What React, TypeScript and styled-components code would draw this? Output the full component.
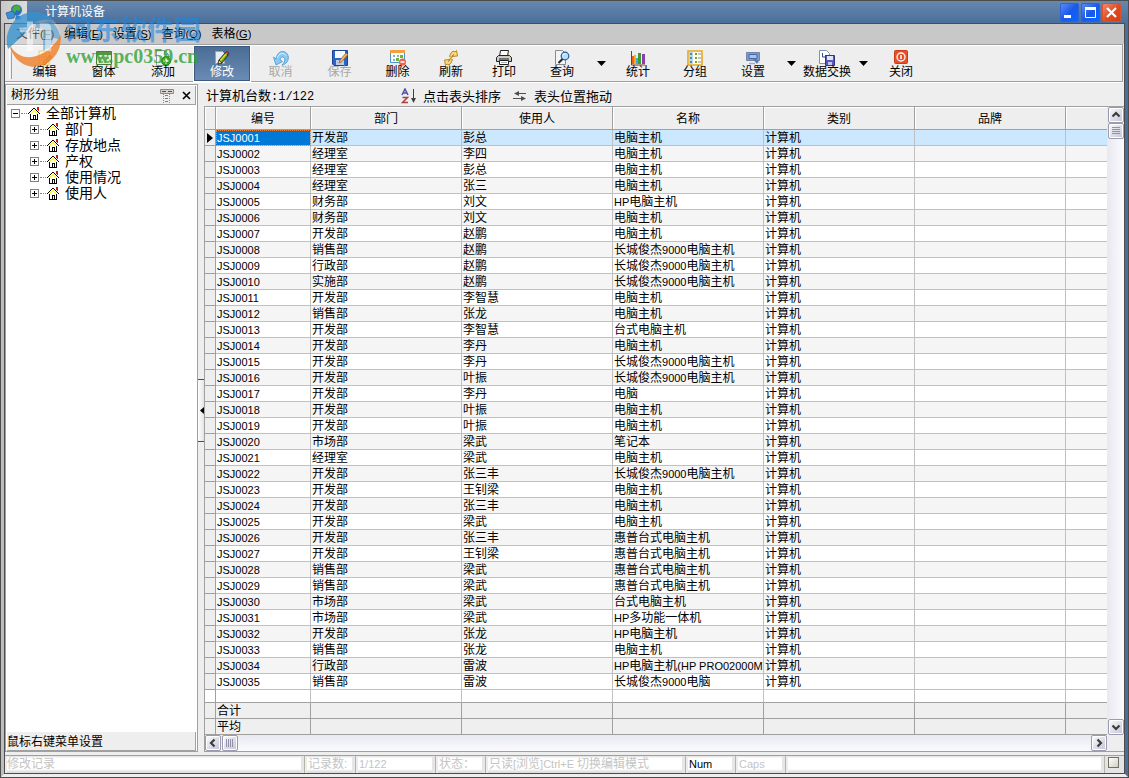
import React from "react";
import styled, { createGlobalStyle, css } from "styled-components";

const DARK = "#4d4d4d";
const FACE = "#eeeeee";
const LINE = "#a0a0a0";
const CJK = '"Liberation Sans", "Noto Sans CJK SC", sans-serif';

const GlobalStyle = createGlobalStyle`
  * { box-sizing: border-box; }
  body { margin: 0; font: 12px/15px ${CJK}; color: #000; background: #4a6f9b; }
  button { font: inherit; color: inherit; padding: 0; margin: 0; border: 0; background: none; }
  svg { display: block; flex: none; }
`;

/* ---------- window frame ---------- */
const Frame = styled.div`
  position: relative;
  min-height: 100vh;
  display: flex;
  flex-direction: column;
  border: 1px solid ${DARK};
  background: #4a6f9b;
`;
const TitleBar = styled.header`
  height: 22px;
  display: flex;
  align-items: center;
  padding-right: 7px;
  background: linear-gradient(#6688ae, #4a6f9b);
`;
const AppBadge = styled.div`
  width: 26px;
  height: 22px;
  display: flex;
  justify-content: center;
  align-items: center;
  margin-right: 18px;
  background: linear-gradient(90deg, #c8c8c8, #dcdcdc);
`;
const Title = styled.h1`
  flex: 1;
  margin: 0;
  font-size: 12px;
  font-weight: 400;
  color: #fff;
`;
const Controls = styled.div`
  display: flex;
  gap: 2px;
`;
const ControlButton = styled.button<{ $close?: boolean }>`
  width: 19px;
  height: 19px;
  border-radius: 2px;
  border: 1px solid ${p => (p.$close ? "#d8502c" : "#2a62d8")};
  background: ${p =>
    p.$close
      ? "linear-gradient(135deg, #f08a6c, #e04a20 55%, #d83c10)"
      : "linear-gradient(135deg, #5c8cf4, #1a58ea 50%, #0a66ff)"};
`;
const Surround = styled.div`
  flex: 1;
  display: flex;
  border-style: solid;
  border-width: 0 3px 3px 3px;
  border-color: transparent #4a6f9b #eeeeee #bdbcbe;
`;
const Client = styled.div`
  flex: 1;
  min-width: 0;
  display: flex;
  flex-direction: column;
  border: 1px solid ${DARK};
  background: ${FACE};
`;

/* ---------- menu and toolbar ---------- */
const MenuBar = styled.nav`
  height: 20px;
  display: flex;
  align-items: center;
  gap: 10px;
  padding-left: 11px;
  background: #c8c8c8;
`;
const MenuItem = styled.button`
  line-height: 18px;
  white-space: nowrap;
`;
const ToolBar = styled.div`
  height: 38px;
  display: flex;
  margin-right: 1px;
  padding-left: 4px;
  border: solid ${LINE};
  border-width: 1px 1px 1px 0;
  box-shadow: inset 0 1px #fff, 0 1px #fff;
`;
const Grip = styled.span`
  width: 3px;
  margin: 2px 3px 2px 0;
  border: solid #fff;
  border-width: 1px 0 0 1px;
  border-right: 1px solid ${LINE};
`;
const ToolButton = styled.button<{ $w: number; $active?: boolean }>`
  width: ${p => p.$w}px;
  flex: none;
  display: flex;
  flex-direction: column;
  align-items: center;
  padding-top: 5px;
  white-space: nowrap;
  line-height: 13px;
  &:disabled { color: #a8a8a8; }
  ${p =>
    p.$active &&
    css`
      margin: 1px;
      padding-top: 3px;
      height: 35px;
      color: #fff;
      border: 1px solid #3c5a80;
      outline: 1px solid #fff;
      background: linear-gradient(#4a6d96, #6a8cb4);
    `}
`;
const DropButton = styled.button<{ $w: number }>`
  width: ${p => p.$w}px;
  display: flex;
  justify-content: center;
  align-items: center;
`;

/* ---------- main area ---------- */
const Main = styled.main`
  flex: 1;
  display: flex;
  margin-top: 1px;
  padding-bottom: 3px;
`;
const Side = styled.aside`
  width: 193px;
  flex: none;
  display: flex;
  flex-direction: column;
  margin-top: 1px;
  padding: 1px 1px 0;
  border: 1px solid ${LINE};
  background: #fff;
`;
const SideHead = styled.div`
  height: 19px;
  display: flex;
  align-items: center;
  gap: 8px;
  padding: 1px 4px 0 4px;
  border: solid ${LINE};
  border-width: 0 1px 1px 0;
  background: ${FACE};
`;
const SideTitle = styled.h2`
  flex: 1;
  margin: 0;
  font-size: 12px;
  font-weight: 400;
`;
const SideFoot = styled.div`
  height: 19px;
  padding-top: 3px;
  border: solid ${LINE};
  border-width: 0 1px 1px 0;
  background: ${FACE};
`;
const Tree = styled.ul<{ $root?: boolean }>`
  list-style: none;
  margin: 0;
  padding: 0 0 0 ${p => (p.$root ? 4 : 19)}px;
  ${p => p.$root && "flex: 1;"}
`;
const TreeRow = styled.div`
  height: 16px;
  display: flex;
  align-items: center;
  font-size: 14px;
  line-height: 16px;
  white-space: nowrap;
`;
const Toggle = styled.button`
  width: 9px;
  height: 9px;
  border: 1px solid #808080;
  background: #fff;
`;
const Dots = styled.span`
  width: 6px;
  margin: 0 1px;
  border-top: 1px dotted #808080;
`;
const TreeText = styled.span`
  margin-left: 6px;
`;
const Splitter = styled.div`
  width: 6px;
  flex: none;
  display: flex;
  align-items: center;
`;
const SplitHandle = styled.button`
  width: 6px;
  height: 63px;
  margin-bottom: 14px;
  display: flex;
  align-items: center;
  justify-content: flex-end;
  border: solid ${DARK};
  border-width: 1px 0;
  background: linear-gradient(90deg, #fff, #e4e4e4);
`;
const Work = styled.section`
  flex: 1;
  min-width: 0;
  display: flex;
  flex-direction: column;
`;
const InfoBar = styled.div`
  height: 23px;
  display: flex;
  align-items: center;
  padding: 3px 0 0 2px;
  font-size: 13px;
  white-space: nowrap;
`;
const Count = styled.span`
  width: 195px;
`;
const Mono = styled.span`
  font: 12px "Liberation Mono", monospace;
`;
const Hint = styled.span`
  display: flex;
  align-items: center;
  gap: 5px;
  margin-right: 11px;
`;
const GridBox = styled.div`
  flex: 1;
  display: grid;
  grid-template-columns: minmax(0, 1fr) 17px;
  grid-template-rows: 1fr 16px;
  border-left: 1px solid ${LINE};
  border-top: 1px solid ${LINE};
  border-bottom: 1px solid ${LINE};
`;

/* ---------- data table ---------- */
const Table = styled.table`
  width: 100%;
  height: 100%;
  table-layout: fixed;
  border-collapse: separate;
  border-spacing: 0;
  background: #fff;
`;
const Col = styled.col<{ $w?: number }>`
  ${p => p.$w && `width: ${p.$w}px;`}
`;
const HeadCell = styled.th`
  height: 23px;
  padding: 3px 0 0;
  font-weight: 400;
  border: solid ${LINE};
  border-width: 0 1px 1px 0;
  background: ${FACE};
  box-shadow: inset 1px 1px #fff;
  &:last-child { border-right: 0; }
`;
const Cell = styled.td<{ $picked?: boolean }>`
  height: 16px;
  padding: 2px 0 0 1px;
  line-height: 13px;
  overflow: hidden;
  white-space: nowrap;
  border: solid #c0c0c0;
  border-width: 0 1px 1px 0;
  &:last-child { border-right: 0; }
  ${p =>
    p.$picked &&
    css`
      color: #fff;
      background: #0078d7;
      outline: 1px dotted #f08030;
      outline-offset: -1px;
    `}
`;
const Marker = styled.td`
  padding: 0 0 0 2px;
  border: solid ${LINE};
  border-width: 0 1px 1px 0;
  background: ${FACE};
`;
const Row = styled.tr<{ $selected: boolean }>`
  background: #fff;
  &:nth-child(even) { background: #f5f5f5; }
  ${p => p.$selected && "&& { background: #cce8ff; }"}
`;
const SpareRow = styled.tr`
  background: #fff;
  ${Cell}, ${Marker} { height: auto; border-bottom-color: ${LINE}; }
  ${Marker} { background: #fff; }
`;
const SumRow = styled.tr`
  background: #efefef;
  ${Cell} { border-color: ${LINE}; }
`;
const Latin = styled.span`
  font-size: 11px;
  line-height: 0;
`;

/* ---------- scroll bars ---------- */
const VBar = styled.div`
  display: flex;
  flex-direction: column;
  align-items: flex-end;
  background: linear-gradient(90deg, #e8e8f0, #fbfbff);
`;
const HBar = styled.div`
  display: flex;
  gap: 1px;
  background: linear-gradient(#e8e8f0, #fbfbff);
`;
const ScrollButton = styled.button<{ $end?: boolean }>`
  width: 16px;
  height: 16px;
  flex: none;
  display: flex;
  align-items: center;
  justify-content: center;
  border: 1px solid #9a9ab0;
  border-radius: 2px;
  box-shadow: inset 0 0 0 1px #fff;
  background: linear-gradient(135deg, #fafafe, #c4c4d4);
  ${VBar} & { margin-top: ${p => (p.$end ? "auto" : "0")}; }
  ${HBar} & { margin-left: ${p => (p.$end ? "auto" : "0")}; }
`;

/* ---------- status bar ---------- */
const StatusBar = styled.footer`
  height: 18px;
  display: flex;
  border-top: 1px solid ${LINE};
  background: linear-gradient(#ddd, #fff 2px, #fff 13px, #ddd 16px);
`;
const Status = styled.div<{ $w?: number; $dim?: boolean }>`
  ${p => (p.$w ? `width: ${p.$w}px; flex: none;` : "flex: 1;")}
  padding-left: 3px;
  line-height: 17px;
  overflow: hidden;
  white-space: nowrap;
  color: ${p => (p.$dim ? "#c4c4c4" : "#000")};
  border-right: 1px solid #b4b4a8;
  box-shadow: inset -3px 0 #e6e6e6, inset 2px 0 #ececec;
  &:first-child { padding-left: 2px; }
`;
const SizeBox = styled.div`
  width: 19px;
  padding: 1px 0 0 3px;
  background: #e4e4e4;
`;
const SizeSquare = styled.div`
  width: 11px;
  height: 11px;
  border: 1px solid #707068;
  background: linear-gradient(135deg, #fff, #d0d0c4);
`;

/* ---------- watermark over the top left corner ---------- */
const Watermark = styled.div`
  position: absolute;
  left: 5px;
  top: 10px;
  display: flex;
  align-items: center;
  gap: 4px;
  pointer-events: none;
`;
const MarkText = styled.div`
  display: flex;
  flex-direction: column;
  white-space: nowrap;
  margin-top: 2px;
`;
const MarkName = styled.span`
  font: 700 27px/32px "Noto Sans CJK SC", sans-serif;
  color: rgba(30, 135, 225, 0.62);
`;
const MarkSite = styled.span`
  font: 700 20px/22px "Liberation Serif", serif;
  color: rgba(46, 160, 52, 0.8);
`;

const Crisp: React.FC<{ w?: number; h?: number; children: React.ReactNode }> = ({ w = 16, h = 16, children }) => (
  <svg width={w} height={h} viewBox={`0 0 ${w} ${h}`} aria-hidden="true">
    {children}
  </svg>
);

const icons: Record<string, React.ReactNode> = {
  edit: (
    <Crisp>
      <path d="M2 1h10v14H2z" fill="#fdf3c0" stroke="#d8bc60" />
      <path d="M4 4h6M4 7h6M4 10h4" stroke="#d8b860" />
      <path d="M7 12l6-7 2 2-6 7-3 1z" fill="#f4a428" stroke="#b87010" strokeWidth=".7" />
    </Crisp>
  ),
  form: (
    <Crisp>
      <path d="M.5 1.500h15v13H.5z" fill="#dceccc" stroke="#4c7c3c" />
      <path d="M1 2h14v3H1z" fill="#5c9444" />
      <path d="M3 7h4v2H3zM9 7h4v2H9zM3 11h4v2H3zM9 11h4v2H9z" fill="#88b470" />
    </Crisp>
  ),
  add: (
    <Crisp>
      <path d="M1.500.5h8l4 4v11h-12z" fill="#f2f4f8" stroke="#8c98a8" />
      <path d="M9.500.5v4h4" fill="none" stroke="#8c98a8" />
      <circle cx="11" cy="11" r="4.500" fill="#3ca81c" stroke="#287c10" />
      <path d="M11 8.500v5M8.500 11h5" stroke="#fff" strokeWidth="1.600" />
    </Crisp>
  ),
  modify: (
    <Crisp>
      <path d="M1.500 1.500h7l2 2v10h-9z" fill="#e8ecf4" stroke="#98a4b8" />
      <path d="M4 14l1-4 6-7 3 2-6 8z" fill="#58b030" stroke="#222" strokeWidth=".9" />
      <path d="M11 3l3 2 1-2-2.500-1.500z" fill="#e83820" stroke="#222" strokeWidth=".6" />
      <path d="M4 14l1-4 3 3z" fill="#f8d890" stroke="#222" strokeWidth=".7" />
      <path d="M6.500 10.500l6-7" stroke="#f8d820" strokeWidth="1.200" />
    </Crisp>
  ),
  undo: (
    <Crisp>
      <path d="M.5 7l2.500 2C4 2 9 .5 12 2c4 2 4.500 8 1 11-1 1-2 1.700-4 2 2-2 3.500-4 2.500-6.500C10.500 6 7.500 6.500 7 10l2.500 1.500L3 15z" fill="#8cc8f0" stroke="#58a4dc" />
      <path d="M4.500 8c1-5 6-6 8.500-2.500" fill="none" stroke="#dcf2ff" />
    </Crisp>
  ),
  save: (
    <Crisp>
      <path d="M.5.500h15v15H2l-1.500-1.500z" fill="#2c64c8" stroke="#1c4494" />
      <path d="M3 1h10v7H3z" fill="#f4f8ff" />
      <path d="M4 10h8v5H4z" fill="#b8cce8" />
      <path d="M7 13l1-3 6-7 2 1.500-6 7z" fill="#f0b860" stroke="#94602c" strokeWidth=".8" />
    </Crisp>
  ),
  remove: (
    <Crisp>
      <path d="M.5.500h14v12H.5z" fill="#f8fcff" stroke="#4c94cc" />
      <path d="M0 0h15v3H0z" fill="#f4a040" />
      <path d="M3 5h2v2H3zM7 5h2v2H7zM3 9h2v2H3z" fill="#9cacb8" />
      <path d="M10 5h3v3h-3zM6 8h3v3H6z" fill="#6cb440" />
      <circle cx="12.500" cy="12" r="3.500" fill="#f06048" />
      <path d="M10.500 12h4" stroke="#fff" strokeWidth="1.600" />
    </Crisp>
  ),
  refresh: (
    <Crisp>
      <path d="M6.500 6.500L8 3c1-2 3-2 4-1l1.500-1.500 1 5.500-5.500.5 1.500-2L9 7.500z" fill="#fbd878" stroke="#b47c1c" strokeWidth=".9" />
      <path d="M9.500 9.500L8 13c-1 2-3 2-4 1l-1.500 1.500L1.500 10 7 9.500l-1.500 2L7 8.500z" fill="#fbd878" stroke="#b47c1c" strokeWidth=".9" />
    </Crisp>
  ),
  print: (
    <Crisp>
      <path d="M4.500.5h8l-1 6h-8z" fill="#fff" stroke="#222" />
      <path d="M2.500 5.500h11l2 2v4h-15v-4z" fill="#c8ccd0" stroke="#222" />
      <path d="M3 9h10" stroke="#222" />
      <path d="M10.500 7h3" stroke="#f0d020" />
      <path d="M3.500 10.500h9v4h-9z" fill="#fff" stroke="#222" />
      <path d="M5 12.500h6" stroke="#a8b4b4" />
    </Crisp>
  ),
  find: (
    <Crisp>
      <path d="M1.500.5h7l3 3v11h-10z" fill="#f4f4f4" stroke="#8c8c8c" />
      <circle cx="11" cy="6" r="3.800" fill="#b4e0fc" stroke="#285c94" strokeWidth="1.200" />
      <path d="M8.500 9l-4 4" stroke="#202428" strokeWidth="2" />
      <path d="M9 5c.5-1 1.500-1.500 2.500-1" stroke="#fff" fill="none" />
    </Crisp>
  ),
  stats: (
    <Crisp>
      <path d="M1.500 1v14H15" stroke="#803820" fill="none" />
      <path d="M2 6h2v8H2z" fill="#f06420" />
      <path d="M4 5h2v9H4z" fill="#f8b020" />
      <path d="M6 8h2v6H6z" fill="#48a8e0" />
      <path d="M8 3h3v11H8z" fill="#3c9c30" />
      <path d="M12 4h3v10h-3z" fill="#8c3cac" />
    </Crisp>
  ),
  group: (
    <Crisp>
      <path d="M1 1h14v14H1z" fill="#fffbe8" stroke="#e4a824" strokeWidth="1.600" />
      <path d="M2 2h4v12H2z" fill="#b8d8ec" />
      <path d="M3 3h2v2H3zM3 7h2v2H3zM3 11h2v2H3z" fill="#5088a8" />
      <path d="M8 3h2v2H8zM8 7h2v2H8zM8 11h2v2H8z" fill="#68a838" />
      <path d="M11 4h3M11 8h3M11 12h3" stroke="#909090" />
    </Crisp>
  ),
  settings: (
    <Crisp>
      <path d="M1.500 2.500h13v8h-13z" fill="#7c9cd0" stroke="#7484a4" />
      <path d="M4 4.500h8v4H4z" fill="#a8c4ec" stroke="#4468a4" />
      <path d="M8 9l4 5 1-2 2 1-5-5z" fill="#5078b8" />
      <path d="M4 13.500h6" stroke="#a4acb8" strokeWidth="1.500" />
    </Crisp>
  ),
  exchange: (
    <Crisp>
      <path d="M.5.500h7l3 3v10H.5z" fill="#fff" stroke="#7c94b4" />
      <path d="M3.500 3v4h4M6 5l2 2-2 2" stroke="#285088" fill="none" />
      <path d="M6.500 5.500h9v10h-9z" fill="#5858b8" stroke="#34348c" />
      <path d="M8 6h6v4H8z" fill="#e0e4f8" />
      <path d="M9 12h4v3H9z" fill="#c4c8e4" />
    </Crisp>
  ),
  close: (
    <Crisp>
      <rect x="1.500" y=".5" width="13" height="13" rx="1" fill="#e8502c" stroke="#c83c18" />
      <circle cx="8" cy="7" r="4" fill="none" stroke="#fff" strokeWidth="1.300" />
      <path d="M8 5v4" stroke="#fff" strokeWidth="1.500" />
    </Crisp>
  ),
};

const DownArrow = () => (
  <svg width="9" height="5" viewBox="0 0 9 5" aria-hidden="true">
    <path d="M0 0h9L4.500 5z" fill="#000" />
  </svg>
);

const House = () => (
  <svg width="12" height="13" viewBox="0 0 12 13" shapeRendering="crispEdges" aria-hidden="true">
    <path d="M2 7l4-4 4 4v5H2z" fill="#fff" />
    <path d="M2 7.500L6 3.500l4 4" fill="none" stroke="#ffff30" strokeWidth="2" />
    <path d="M0 7L6 1l6 6" fill="none" stroke="#000" />
    <path d="M9 0h2v4L9 3z" fill="#e01010" />
    <path d="M2.500 7v5.500h7V7M5.500 12V8.500h2V12" fill="none" stroke="#000" />
  </svg>
);

const PlusMinus = ({ open }: { open?: boolean }) => (
  <svg width="7" height="7" viewBox="0 0 7 7" shapeRendering="crispEdges" aria-hidden="true">
    <path d={open ? "M1 3h5v1H1z" : "M1 3h5v1H1zM3 1h1v5H3z"} fill="#000" />
  </svg>
);

const Chevron = ({ turn }: { turn: number }) => (
  <svg width="10" height="10" viewBox="0 0 10 10" aria-hidden="true">
    <path d="M1.500 6.500L5 3l3.500 3.500" transform={`rotate(${turn} 5 5)`} fill="none" stroke="#3c3c3c" strokeWidth="2.200" />
  </svg>
);

const ThumbRidges = ({ turn = 0 }: { turn?: number }) => (
  <svg width="8" height="8" viewBox="0 0 8 8" aria-hidden="true">
    <path d="M.5 0v8M2.500 0v8M4.500 0v8M6.500 0v8" transform={`rotate(${turn} 4 4)`} stroke="#9090a8" />
  </svg>
);

type Tool = { label: string; icon: string; w: number; active?: boolean; disabled?: boolean; drop?: number };
const tools: Tool[] = [
  { label: "编辑", icon: "edit", w: 59 },
  { label: "窗体", icon: "form", w: 59 },
  { label: "添加", icon: "add", w: 60 },
  { label: "修改", icon: "modify", w: 56, active: true },
  { label: "取消", icon: "undo", w: 59, disabled: true },
  { label: "保存", icon: "save", w: 59, disabled: true },
  { label: "删除", icon: "remove", w: 57 },
  { label: "刷新", icon: "refresh", w: 50 },
  { label: "打印", icon: "print", w: 56 },
  { label: "查询", icon: "find", w: 60, drop: 18 },
  { label: "统计", icon: "stats", w: 56 },
  { label: "分组", icon: "group", w: 58 },
  { label: "设置", icon: "settings", w: 58, drop: 18 },
  { label: "数据交换", icon: "exchange", w: 54, drop: 18 },
  { label: "关闭", icon: "close", w: 58 },
];

const menus: [string, string][] = [
  ["文件", "F"],
  ["编辑", "E"],
  ["设置", "S"],
  ["查询", "Q"],
  ["表格", "G"],
];

const branches = ["部门", "存放地点", "产权", "使用情况", "使用人"];
const heads = ["编号", "部门", "使用人", "名称", "类别", "品牌"];

const PC = "电脑主机";
const GW = "长城俊杰9000电脑主机";
const HUI = "惠普台式电脑主机";
const records: [string, string, string][] = [
  ["开发部", "彭总", PC],
  ["经理室", "李四", PC],
  ["经理室", "彭总", PC],
  ["经理室", "张三", PC],
  ["财务部", "刘文", "HP电脑主机"],
  ["财务部", "刘文", PC],
  ["开发部", "赵鹏", PC],
  ["销售部", "赵鹏", GW],
  ["行政部", "赵鹏", GW],
  ["实施部", "赵鹏", GW],
  ["开发部", "李智慧", PC],
  ["销售部", "张龙", PC],
  ["开发部", "李智慧", "台式电脑主机"],
  ["开发部", "李丹", PC],
  ["开发部", "李丹", GW],
  ["开发部", "叶振", GW],
  ["开发部", "李丹", "电脑"],
  ["开发部", "叶振", PC],
  ["开发部", "叶振", PC],
  ["市场部", "梁武", "笔记本"],
  ["经理室", "梁武", PC],
  ["开发部", "张三丰", GW],
  ["开发部", "王钊梁", PC],
  ["开发部", "张三丰", PC],
  ["开发部", "梁武", PC],
  ["开发部", "张三丰", HUI],
  ["开发部", "王钊梁", HUI],
  ["销售部", "梁武", HUI],
  ["销售部", "梁武", HUI],
  ["市场部", "梁武", "台式电脑主机"],
  ["市场部", "梁武", "HP多功能一体机"],
  ["开发部", "张龙", "HP电脑主机"],
  ["销售部", "张龙", PC],
  ["行政部", "雷波", "HP电脑主机(HP PRO02000MT)"],
  ["销售部", "雷波", "长城俊杰9000电脑"],
];

/* Latin runs are set one size smaller than the Chinese around them. */
const Mixed = ({ text }: { text: string }) => (
  <>
    {text.split(/([\x20-\x7e]+)/).map((part, i) => (i % 2 ? <Latin key={i}>{part}</Latin> : part))}
  </>
);

const EmptyCells = ({ n }: { n: number }) => (
  <>
    {Array.from({ length: n }, (_, i) => (
      <Cell key={i} />
    ))}
  </>
);

export default function App() {
  return (
    <>
      <GlobalStyle />
      <Frame>
        <TitleBar>
          <AppBadge>
            <Crisp w={18} h={16}>
              <circle cx="11.500" cy="6" r="5.500" fill="#2c6cc4" />
              <path d="M9 2l4-1 3 3-2 3-3-1-1 3-3-3z" fill="#48b038" />
              <path d="M1 9l6-2 3 3-1 4-6 1z" fill="#3c90d8" stroke="#285c98" strokeWidth=".7" />
              <path d="M11 11l4 1 1 3-6 1z" fill="#2c80cc" />
            </Crisp>
          </AppBadge>
          <Title>计算机设备</Title>
          <Controls>
            <ControlButton aria-label="最小化">
              <Crisp w={17} h={17}><path d="M3 11h7v3H3z" fill="#fff" /></Crisp>
            </ControlButton>
            <ControlButton aria-label="最大化">
              <Crisp w={17} h={17}><path d="M3.500 4.500h10v9h-10z" fill="none" stroke="#fff" /><path d="M3 3h11v3H3z" fill="#fff" /></Crisp>
            </ControlButton>
            <ControlButton $close aria-label="关闭窗口">
              <Crisp w={17} h={17}><path d="M4 4l9 9M13 4l-9 9" stroke="#fff" strokeWidth="2.200" /></Crisp>
            </ControlButton>
          </Controls>
        </TitleBar>
        <Surround>
          <Client>
            <MenuBar>
              {menus.map(([name, key]) => (
                <MenuItem key={key}>
                  {name}
                  <Latin>(<u>{key}</u>)</Latin>
                </MenuItem>
              ))}
            </MenuBar>
            <ToolBar>
              <Grip />
              {tools.map(t => (
                <React.Fragment key={t.label}>
                  <ToolButton $w={t.w} $active={t.active} disabled={t.disabled}>
                    {icons[t.icon]}
                    {t.label}
                  </ToolButton>
                  {t.drop && (
                    <DropButton $w={t.drop} aria-label={`${t.label}选项`}>
                      <DownArrow />
                    </DropButton>
                  )}
                </React.Fragment>
              ))}
            </ToolBar>
            <Main>
              <Side>
                <SideHead>
                  <SideTitle>树形分组</SideTitle>
                  <Crisp w={14} h={14}>
                    <path d="M.5.500h13v4H.5z" fill="#d8d4cc" stroke="#8c8c84" />
                    <path d="M2 2.500h4M8 2.500h4" stroke="#505050" />
                    <path d="M3.500 5v9M9.500 5v9" stroke="#909090" strokeDasharray="1 1" />
                    <path d="M5 6.500h3M5 9.500h3M5 12.500h3" stroke="#808080" />
                  </Crisp>
                  <button aria-label="关闭分组">
                    <Crisp w={9} h={9}><path d="M1 1l7 7M8 1L1 8" stroke="#000" strokeWidth="1.600" /></Crisp>
                  </button>
                </SideHead>
                <Tree $root>
                  <li>
                    <TreeRow>
                      <Toggle aria-label="折叠"><PlusMinus open /></Toggle>
                      <Dots />
                      <House />
                      <TreeText>全部计算机</TreeText>
                    </TreeRow>
                    <Tree>
                      {branches.map(b => (
                        <li key={b}>
                          <TreeRow>
                            <Toggle aria-label={`展开${b}`}><PlusMinus /></Toggle>
                            <Dots />
                            <House />
                            <TreeText>{b}</TreeText>
                          </TreeRow>
                        </li>
                      ))}
                    </Tree>
                  </li>
                </Tree>
                <SideFoot>鼠标右键菜单设置</SideFoot>
              </Side>
              <Splitter>
                <SplitHandle aria-label="收起分组">
                  <svg width="4" height="7" viewBox="0 0 4 7" aria-hidden="true"><path d="M4 0v7L0 3.500z" /></svg>
                </SplitHandle>
              </Splitter>
              <Work>
                <InfoBar>
                  <Count>计算机台数<Mono>:1/122</Mono></Count>
                  <Hint>
                    <svg width="17" height="16" viewBox="0 0 17 16" aria-hidden="true">
                      <path d="M1 7l3-6 3 6M2 5h4" fill="none" stroke="#5050a8" strokeWidth="1.500" />
                      <path d="M1.500 9.500h5l-5 5h5.500" fill="none" stroke="#b04040" strokeWidth="1.500" />
                      <path d="M12.500 1v12" stroke="#404040" />
                      <path d="M10 10h5l-2.500 5z" fill="#404040" />
                    </svg>
                    点击表头排序
                  </Hint>
                  <Hint>
                    <svg width="17" height="12" viewBox="0 0 17 12" aria-hidden="true">
                      <path d="M4 3.500h10M1 8.500h10" stroke="#505050" strokeWidth="1.200" />
                      <path d="M2 3.500L7 1v5zM14 8.500L9 6v5z" fill="#505050" />
                    </svg>
                    表头位置拖动
                  </Hint>
                </InfoBar>
                <GridBox>
                  <Table>
                    <colgroup>
                      <Col $w={11} />
                      <Col $w={95} />
                      {heads.slice(1).map(h => (
                        <Col key={h} $w={151} />
                      ))}
                      <Col />
                    </colgroup>
                    <thead>
                      <tr>
                        <HeadCell />
                        {heads.map(h => (
                          <HeadCell key={h}>{h}</HeadCell>
                        ))}
                        <HeadCell />
                      </tr>
                    </thead>
                    <tbody>
                      {records.map(([dept, user, name], i) => (
                        <Row key={i} $selected={i === 0}>
                          <Marker>
                            {i === 0 && (
                              <svg width="6" height="10" viewBox="0 0 6 10" aria-hidden="true"><path d="M0 0v10l6-5z" /></svg>
                            )}
                          </Marker>
                          <Cell $picked={i === 0}><Mixed text={`JSJ${String(i + 1).padStart(4, "0")}`} /></Cell>
                          <Cell>{dept}</Cell>
                          <Cell>{user}</Cell>
                          <Cell><Mixed text={name} /></Cell>
                          <Cell>计算机</Cell>
                          <EmptyCells n={2} />
                        </Row>
                      ))}
                      <SpareRow>
                        <Marker />
                        <EmptyCells n={7} />
                      </SpareRow>
                    </tbody>
                    <tfoot>
                      {["合计", "平均"].map(s => (
                        <SumRow key={s}>
                          <Marker />
                          <Cell>{s}</Cell>
                          <EmptyCells n={6} />
                        </SumRow>
                      ))}
                    </tfoot>
                  </Table>
                  <VBar>
                    <ScrollButton aria-label="向上"><Chevron turn={0} /></ScrollButton>
                    <ScrollButton aria-label="垂直滑块"><ThumbRidges turn={90} /></ScrollButton>
                    <ScrollButton $end aria-label="向下"><Chevron turn={180} /></ScrollButton>
                  </VBar>
                  <HBar>
                    <ScrollButton aria-label="向左"><Chevron turn={270} /></ScrollButton>
                    <ScrollButton aria-label="水平滑块"><ThumbRidges /></ScrollButton>
                    <ScrollButton $end aria-label="向右"><Chevron turn={90} /></ScrollButton>
                  </HBar>
                </GridBox>
              </Work>
            </Main>
            <StatusBar>
              <Status $w={300} $dim>修改记录</Status>
              <Status $w={51} $dim>记录数:</Status>
              <Status $w={80} $dim><Mixed text="1/122" /></Status>
              <Status $w={50} $dim>状态：</Status>
              <Status $w={200} $dim><Mixed text="只读[浏览]Ctrl+E 切换编辑模式" /></Status>
              <Status $w={50}><Mixed text="Num" /></Status>
              <Status $w={50} $dim><Mixed text="Caps" /></Status>
              <Status />
              <SizeBox><SizeSquare /></SizeBox>
            </StatusBar>
          </Client>
        </Surround>
        <Watermark>
          <svg width="56" height="56" viewBox="18 33 166 166" aria-hidden="true">
            <circle cx="101" cy="116" r="80" fill="#fff" opacity=".25" />
            <path d="M24 146C8 96 44 36 100 36c26 0 46 10 60 26C120 52 92 66 76 98l-52 48z" fill="#2088cc" opacity=".7" />
            <path d="M150 62c20 16 28 34 30 56l-22-6-10 30-20 8V84h-22v-14h22c8-6 14-8 22-8z" fill="#2088cc" opacity=".45" />
            <path d="M28 132c14 28 44 44 74 36 34-8 62-34 78-64 6 50-30 92-78 94-36 0-66-28-74-66z" fill="#ee7c24" opacity=".8" />
            <path d="M58 82h22v-18h18v18h14v14H98v56H80V96H58zM118 70h20c10 0 14 6 14 16v66h-18V88h-16z" fill="#fff" opacity=".5" />
          </svg>
          <MarkText>
            <MarkName>河东软件园</MarkName>
            <MarkSite>www.pc0359.cn</MarkSite>
          </MarkText>
        </Watermark>
      </Frame>
    </>
  );
}
